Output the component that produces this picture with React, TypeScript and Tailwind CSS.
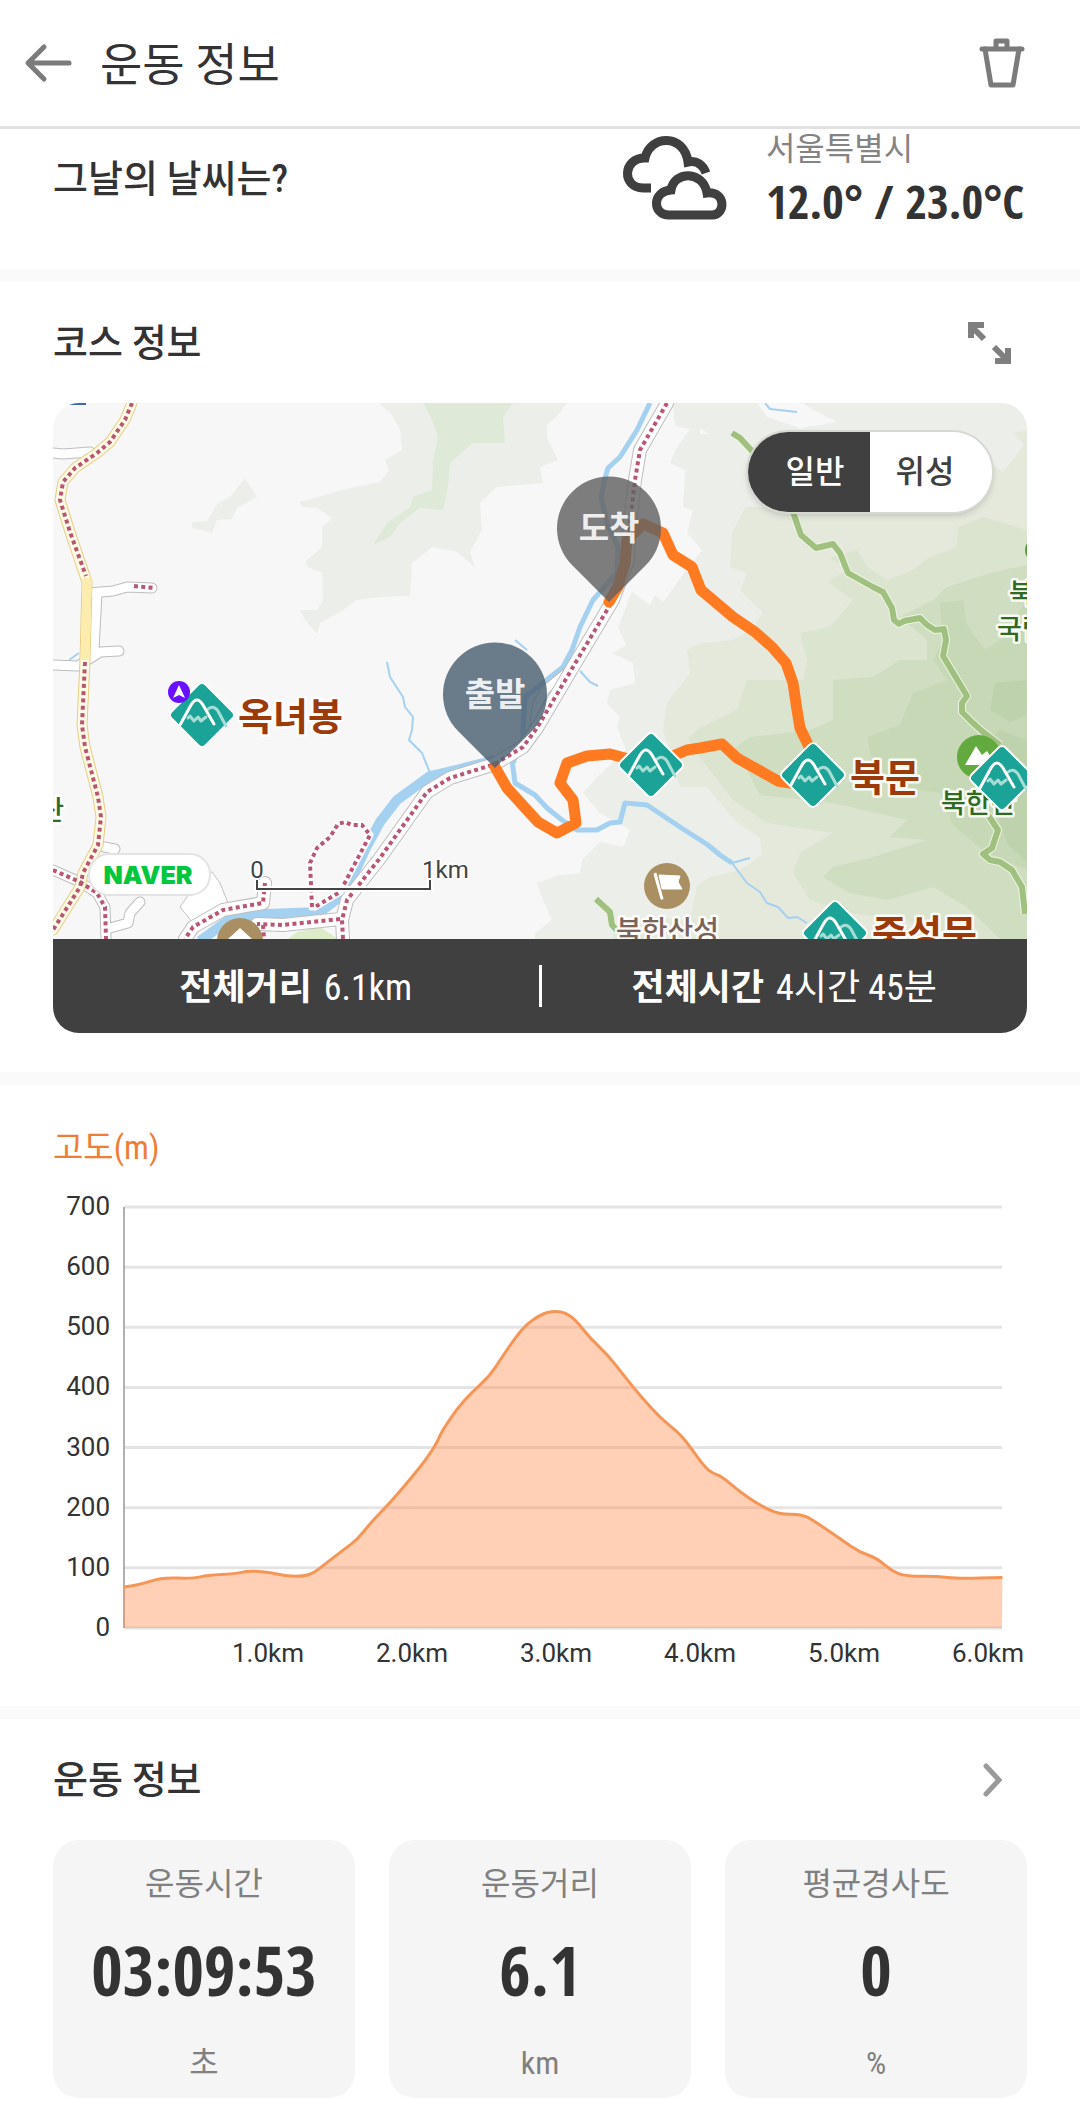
import React, { useState } from 'react';

type MapMode = 'normal' | 'satellite';

interface Stat {
  label: string;
  value: string;
  unit: string;
}

const STATS: Stat[] = [
  { label: '운동시간', value: '03:09:53', unit: '초' },
  { label: '운동거리', value: '6.1', unit: 'km' },
  { label: '평균경사도', value: '0', unit: '%' },
];

// [distance in km, altitude in m]
const ALTITUDE: [number, number][] = [
  [0, 68], [0.1, 71], [0.26, 84], [0.48, 82], [0.58, 88], [0.77, 90], [0.86, 95], [1.01, 93],
  [1.13, 86], [1.25, 86], [1.32, 92], [1.41, 109], [1.53, 131], [1.62, 147], [1.71, 174],
  [1.81, 199], [1.89, 220], [2.01, 254], [2.11, 284], [2.18, 311], [2.2, 324], [2.31, 364],
  [2.42, 393], [2.54, 419], [2.61, 445], [2.73, 487], [2.8, 506], [2.89, 520], [2.94, 525],
  [3.0, 527], [3.07, 524], [3.14, 511], [3.24, 481], [3.36, 454], [3.47, 420], [3.6, 382],
  [3.73, 348], [3.85, 325], [3.92, 305], [4.03, 268], [4.09, 257], [4.15, 252], [4.26, 230],
  [4.38, 209], [4.54, 189], [4.72, 189], [4.83, 172], [4.98, 147], [5.11, 126], [5.23, 116],
  [5.33, 95], [5.43, 86], [5.65, 86], [5.79, 82], [6.1, 84],
];

const CHART = { left: 71, right: 949, top: 17, bottom: 438, maxAltitude: 700, kmWidth: 144 };

// Runs a quadratic curve through the midpoints so the altitude line has no hard corners
const smoothLine = (points: [number, number][]): string => {
  const [first, ...rest] = points;
  const last = points[points.length - 1];
  const curves = rest.slice(0, -1).map(([x, y], i) => {
    const [nextX, nextY] = rest[i + 1];
    return `Q${x},${y} ${(x + nextX) / 2},${(y + nextY) / 2}`;
  });
  return `${first[0]},${first[1]} ${curves.join(' ')} L${last[0]},${last[1]}`;
};

const SectionDivider: React.FC = () => <div className="h-[13px] bg-[#fafafa]" />;

const CloudIcon: React.FC = () => (
  <svg viewBox="624 132 110 92" className="h-[92px] w-[110px]" fill="none" stroke="#3f3f3f" strokeWidth="9">
    <path d="M655 187 H647 C626 187 626 157 649 157 C654 134 688 132 692 161 C701 159 707 164 710 172" />
    <path d="M673 214 C656 214 656 190 675 189 C678 170 707 169 711 192 C730 190 730 214 716 214 Z" />
  </svg>
);

const Terrain: React.FC = () => (
  <g>
    <rect x="53" y="403" width="974" height="536" fill="#f7f7f7" />
    <g fill="#ecefe9">
      <path d="M379 403 L392 415 400 430 402 450 385 460 389 470 380 482 350 488 317 497 300 502 302 507 317 508 332 518 322 527 322 547 305 562 308 567 322 573 323 600 317 610 300 610 305 620 317 634 320 623 340 612 357 600 380 597 410 596 412 563 433 547 457 552 475 567 470 552 482 530 480 503 497 487 543 483 540 467 558 460 547 437 547 425 560 413 567 403 Z" />
      <path d="M245 478 L257 497 237 508 232 519 217 520 212 533 192 528 192 522 207 521 218 503 230 497 Z" />
      <path d="M673 403 L675 426 690 429 677 447 670 463 685 470 683 507 693 510 687 533 702 550 690 565 663 602 655 595 650 605 632 592 618 627 626 645 612 653 633 663 635 683 610 690 607 703 620 717 617 727 626 750 597 777 583 793 600 813 630 830 623 847 600 842 582 860 580 873 560 875 537 883 543 900 552 920 535 933 535 939 1027 939 1027 403 Z" />
    </g>
    <path d="M423 403 L432 420 438 437 433 460 432 490 413 497 410 507 387 523 373 545 390 537 400 523 420 508 443 510 448 487 450 463 473 443 505 443 503 417 513 403 Z" fill="#dfe9d8" />
    <path d="M757 403 L767 417 800 428 837 422 810 408 803 403 Z M700 428 L709 434 700 434 Z M760 495 L768 535 777 550 781 520 790 500 Z" fill="#f7f7f7" />
    <path d="M745 507 L732 533 730 567 747 573 740 590 763 613 750 630 733 640 700 643 687 650 690 673 667 703 663 730 668 745 680 787 707 787 737 823 760 838 762 855 740 870 710 877 697 885 690 920 640 917 613 933 613 939 1027 939 1027 430 1013 433 1024 445 1003 472 987 460 965 455 900 480 850 505 Z" fill="#e5e9dc" />
    <path d="M1027 530 L983 517 958 527 957 547 930 557 913 570 887 580 867 567 857 550 830 558 850 568 828 582 853 600 830 627 800 633 807 660 803 680 747 680 737 710 700 728 688 738 702 760 733 800 767 823 833 833 800 853 793 873 810 900 850 913 907 920 943 939 1027 939 Z" fill="#dae4ce" />
    <path d="M990 573 L947 587 933 600 900 617 927 640 927 660 900 660 873 677 833 680 833 720 810 730 770 735 750 737 735 748 760 795 833 803 907 820 890 837 927 840 870 858 833 867 823 877 850 893 887 900 933 887 967 907 1000 939 1027 939 1027 565 Z" fill="#cfddc0" />
    <path d="M940 603 L963 600 967 625 985 650 1000 640 1027 600 1027 870 983 850 953 825 940 793 900 787 873 763 867 737 900 725 913 693 947 680 933 660 943 640 Z" fill="#c6d8b6" />
    <path d="M1027 740 L1000 730 985 745 992 800 1008 845 1027 862 Z M1027 680 L995 683 990 710 1010 722 1027 715 Z" fill="#bfd2ae" />
    <path d="M288 939 L297 932 320 927 338 939 Z" fill="#dcecc9" />
  </g>
);

const Rivers: React.FC = () => (
  <g fill="none" stroke="#a5d1f1" strokeLinejoin="round">
    <path d="M650 403 L637 430 620 457 608 468 605 478 601 497 607 523 618 547 617 573 593 600 580 627 572 650 563 667 525 697 523 728 523 740 512 765" strokeWidth="5" />
    <path d="M512 760 L515 783 535 795 547 808 562 820 577 830 597 830 610 823 620 822 625 803 647 805 680 827 708 845 720 855 732 863" strokeWidth="5" />
    <path d="M732 863 L747 883 760 892 767 903 778 907 788 918 797 917 807 923 M732 863 L750 858" strokeWidth="2" />
    <path d="M495 760 L460 769 430 776 397 800 380 822 366 848 345 893 320 912 267 914 230 919 200 941" strokeWidth="10" />
    <path d="M387 662 L390 677 403 697 405 707 413 717 412 730 409 740 422 753 430 773" strokeWidth="2" />
    <path d="M515 640 L527 650 M580 671 L590 682 598 686 M765 403 L770 409 797 412 M69 660 L79 653" strokeWidth="2" />
  </g>
);

const ROADS = {
  yellow: 'M132 403 L125 420 110 442 97 453 75 468 63 482 60 500 70 532 87 582 85 660 82 725 85 747 98 797 101 817 98 845 83 873 80 887 53 930',
  side: 'M53 453 L63 454 90 452 M88 593 L113 591 127 587 152 588 M97 593 L94 650 M53 665 L78 666 100 652 119 651 M104 847 L115 849 M140 902 L130 913 128 923 110 928 M53 870 L80 882 97 893 105 907 106 939',
  main: 'M667 403 L640 450 635 480 630 523 628 560 613 600 573 667 537 728 523 747 495 764 450 778 427 792 380 858 347 900 342 920 343 939',
  local: 'M340 919 L283 925 257 924 M265 883 L263 903 223 910 193 927 185 939',
  loop: 'M312 907 L310 863 317 848 330 837 338 824 345 822 352 825 362 825 370 835 340 892 315 907',
  fork: 'M572 668 L545 690 537 705 533 735',
};

const Roads: React.FC = () => (
  <g fill="none" strokeLinecap="round" strokeLinejoin="round">
    <path d="M212 872 L220 883 228 903 193 923 180 907 187 897 Z" fill="#fff" stroke="#c2c2c2" />
    <path d={ROADS.side} stroke="#bdbdbd" strokeWidth="11" />
    <path d={ROADS.side} stroke="#fff" strokeWidth="9" />
    <path d={ROADS.fork} stroke="#bdbdbd" strokeWidth="10" />
    <path d={ROADS.fork} stroke="#fff" strokeWidth="8" />
    <path d={`${ROADS.main} ${ROADS.local}`} stroke="#bdbdbd" strokeWidth="14" />
    <path d={`${ROADS.main} ${ROADS.local}`} stroke="#fff" strokeWidth="12" />
    <path d={ROADS.yellow} stroke="#e6cd83" strokeWidth="11" />
    <path d={ROADS.yellow} stroke="#fffae6" strokeWidth="9" />
    <path d="M87 578 L87 590 85 660" stroke="#fcecae" strokeWidth="9" strokeLinecap="butt" />
    <path d={ROADS.loop} stroke="#fff" strokeWidth="7" />
    <g stroke="#b95674" strokeWidth="4" strokeDasharray="4 3.3" strokeLinecap="butt">
      <path d="M132 403 L125 420 110 442 97 453 75 468 63 482 60 500 70 532 86 576" />
      <path d="M85 662 L82 725 85 747 98 797 101 817 98 845 83 873 80 887 53 930" />
      <path d="M134 586 L154 588 M53 870 L80 882 97 893 105 907 106 939 M263 925 L264 939" />
      <path d={ROADS.loop} />
      <path d={ROADS.main} />
      <path d={ROADS.local} />
    </g>
  </g>
);

const TRAIL =
  'M732 433 L740 438 753 452 780 485 793 512 801 535 816 548 833 544 840 553 848 573 873 587 883 592 892 608 894 620 899 624 904 621 920 618 927 625 935 630 944 629 946 640 943 656 967 696 962 703 962 712 973 723 983 732 1000 745 M988 815 L998 830 992 848 983 854 990 860 1000 862 1012 870 1022 887 1025 914 M596 899 L610 912 612 925 625 939';

const Trails: React.FC = () => (
  <g fill="none" strokeLinejoin="round">
    <path d={TRAIL} stroke="#edf4e4" strokeWidth="8" />
    <path d={TRAIL} stroke="#a0c07f" strokeWidth="6" />
  </g>
);

const COURSE =
  'M609 602 L618 587 625 563 627 540 643 524 663 533 673 555 692 567 701 590 733 617 755 632 772 647 786 663 793 683 797 710 800 728 813 755 M790 783 L778 781 762 772 737 758 722 744 700 748 687 750 651 765 610 754 587 756 567 763 560 783 573 800 576 823 557 833 538 822 507 788 495 767';

const PeakMarker: React.FC<{ x: number; y: number }> = ({ x, y }) => (
  <g transform={`translate(${x} ${y})`} fill="none" strokeLinecap="round" strokeLinejoin="round">
    <rect x="-24" y="-24" width="48" height="48" rx="5" transform="rotate(45)" fill="#1aa396" stroke="#fff" strokeWidth="2" />
    <path d="M-14 3 L-12 1 -8 6 -4 2 -1 6 4 2 M5 -5 Q11 -11 16 -4 L24 11" stroke="#a7ddd6" strokeWidth="3" />
    <path d="M-22 10 L-11 -10 Q-5 -20 1 -10 L12 9" stroke="#fff" strokeWidth="3" />
  </g>
);

const Pin: React.FC<{ x: number; y: number; label: string; color: string }> = ({ x, y, label, color }) => (
  <g transform={`translate(${x} ${y})`}>
    <path d="M0 74 L-36 38 A52 52 0 1 1 36 38 Z" fill={color} fillOpacity="0.82" />
    <text y="12" textAnchor="middle" fill="#fff" fillOpacity="0.9" className="text-[33px] font-bold">
      {label}
    </text>
  </g>
);

const CourseMap: React.FC = () => (
  <svg
    viewBox="53 403 974 536"
    role="img"
    aria-label="코스 지도"
    className="block w-full font-['Noto_Sans_CJK_KR',sans-serif]"
  >
    <Terrain />
    <Rivers />
    <Roads />
    <Trails />
    <path d="M65 403 H86 V405 H65 Z" fill="#3f62b5" />

    {/* place names */}
    <g stroke="#fff" strokeOpacity="0.9" strokeWidth="5" strokeLinejoin="round" className="[paint-order:stroke]">
      <g fill="#2f6b1f" className="text-[27px] font-medium">
        <text x="64" y="820" textAnchor="end">산</text>
        <text x="1009" y="603">북한산</text>
        <text x="997" y="639">국립공원</text>
        <text x="941" y="813">북한산</text>
      </g>
      <text x="616" y="941" fill="#7a6358" className="text-[28px] font-medium">북한산성</text>
      <g fill="#9c3a0a" className="text-[38px] font-bold">
        <text x="238" y="730">옥녀봉</text>
        <text x="850" y="791">북문</text>
        <text x="872" y="947">중성문</text>
      </g>
    </g>

    <circle cx="667" cy="886" r="23" fill="#a98f61" />
    <path d="M654 874 L656 873 663 899 661 899 Z M659 875 L680 876 678 882 682 889 662 889 Z" fill="#fff" stroke="#fff" />
    <circle cx="240" cy="941" r="23" fill="#a98f61" />
    <path d="M240 928 L252 939 228 939 Z" fill="#fff" />
    <circle cx="1037" cy="550" r="12" fill="#4f9a35" />
    <circle cx="979" cy="757" r="22" fill="#62a93e" />
    <path d="M965 765 L976 746 982 755 987 751 996 765 Z" fill="#fff" />

    <path d={COURSE} fill="none" stroke="#ff7a21" strokeWidth="11" strokeLinejoin="round" strokeLinecap="round" />

    <PeakMarker x={202} y={715} />
    <PeakMarker x={651} y={765} />
    <PeakMarker x={813} y={775} />
    <PeakMarker x={1002} y={778} />
    <PeakMarker x={835} y={933} />

    <circle cx="179" cy="692" r="11" fill="#6a0fff" />
    <path d="M179 685 L185 698 179 695 173 698 Z" fill="#fff" />

    <Pin x={609} y={528} label="도착" color="#616161" />
    <Pin x={495} y={694} label="출발" color="#4b5f72" />

    <rect x="89" y="854" width="121" height="41" rx="20" fill="#fff" stroke="#e3e3e3" strokeWidth="2" />
    <text x="148" y="884" textAnchor="middle" fill="#00c73c" className="font-['Inter',sans-serif] text-[25px] font-black">
      NAVER
    </text>

    <path d="M257 880 V889 H430 V880" fill="none" stroke="#fff" strokeWidth="6" />
    <path d="M257 880 V889 H430 V880" fill="none" stroke="#444" strokeWidth="2" />
    <g fill="#444" stroke="#fff" strokeWidth="3" className="font-['Roboto',sans-serif] text-[24px] [paint-order:stroke]">
      <text x="257" y="878" textAnchor="middle">0</text>
      <text x="422" y="878">1km</text>
    </g>
  </svg>
);

const AltitudeChart: React.FC = () => {
  const { left, right, top, bottom, maxAltitude, kmWidth } = CHART;
  const toY = (m: number) => bottom - (m / maxAltitude) * (bottom - top);
  const line = smoothLine(ALTITUDE.map(([km, m]) => [left + km * kmWidth, toY(m)]));

  return (
    <svg viewBox="0 0 974 480" role="img" aria-label="고도 그래프" className="block w-full overflow-visible font-['Roboto',sans-serif]">
      {[0, 100, 200, 300, 400, 500, 600, 700].map((m) => (
        <g key={m}>
          <line x1={left} x2={right} y1={toY(m)} y2={toY(m)} stroke="#e4e4e4" strokeWidth="3" />
          <text x={left - 14} y={toY(m) + 8} textAnchor="end" fill="#333" className="text-[26px]">
            {m}
          </text>
        </g>
      ))}
      <line x1={left} x2={left} y1={top} y2={bottom} stroke="#b0b0b0" strokeWidth="2" />
      <path d={`M${left},${bottom} L${line} L${right},${bottom} Z`} fill="#ff8a45" fillOpacity="0.4" />
      <path d={`M${line}`} fill="none" stroke="#f59556" strokeWidth="3" strokeLinejoin="round" />
      {[1, 2, 3, 4, 5, 6].map((km) => (
        <text key={km} x={left + km * kmWidth} y="472" textAnchor="middle" fill="#333" className="text-[26px]">
          {km.toFixed(1)}km
        </text>
      ))}
    </svg>
  );
};

const App: React.FC = () => {
  const [mode, setMode] = useState<MapMode>('normal');

  return (
    <div className="min-h-screen bg-white font-['Roboto_Condensed','Noto_Sans_CJK_KR',sans-serif] text-[#333]">
      <header className="flex h-[129px] items-center border-b-3 border-[#e2e2e2] pr-[54px] pl-6">
        <button type="button" aria-label="뒤로">
          <svg viewBox="0 0 48 40" className="h-10 w-12" fill="none" stroke="#7b7b7b" strokeWidth="5" strokeLinecap="round" strokeLinejoin="round">
            <path d="M20 4 L4 20 20 36 M5 20 H45" />
          </svg>
        </button>
        <h1 className="ml-7 pt-1 text-[46px] leading-none">운동 정보</h1>
        <button type="button" aria-label="삭제" className="ml-auto">
          <svg viewBox="0 0 48 52" className="h-[52px] w-12" fill="none" stroke="#7b7b7b" strokeWidth="5" strokeLinecap="round" strokeLinejoin="round">
            <path d="M4 12 H44 M18 10 V4 H29 V10" />
            <path d="M7 12 L13 48 H35 L41 12" />
          </svg>
        </button>
      </header>

      <section className="flex h-[140px] items-start justify-between pr-14 pl-[53px]">
        <h2 className="mt-[23px] text-[38px] leading-[54px] font-medium">그날의 날씨는?</h2>
        <div className="flex">
          <div className="mt-1 mr-9">
            <CloudIcon />
          </div>
          <div>
            <p className="text-[32px] leading-[40px] text-[#848484]">서울특별시</p>
            <p className="font-['Open_Sans_Condensed','Roboto_Condensed',sans-serif] text-[47px] leading-[64px] font-bold">
              12.0° / 23.0°C
            </p>
          </div>
        </div>
      </section>

      <SectionDivider />

      <section className="px-[53px] pt-8 pb-[39px]">
        <div className="flex h-[58px] items-center justify-between pr-[14px]">
          <h2 className="text-[38px] leading-[54px] font-medium">코스 정보</h2>
          <button type="button" aria-label="지도 확대">
            <svg viewBox="0 0 48 48" className="size-12" fill="none" stroke="#7f7f7f" strokeWidth="6">
              <path d="M6 19 V6 H19 M6 7 L19 20" />
              <path d="M43 29 V42 H30 M42 41 L29 28" />
            </svg>
          </button>
        </div>

        <div className="relative mt-[31px] overflow-hidden rounded-[26px]">
          <CourseMap />
          <div className="absolute top-[27px] right-[33px] flex h-[84px] w-[248px] overflow-hidden rounded-full border-2 border-[#d6d8d2] bg-white text-[32px] leading-[44px] font-medium shadow-md">
            <button
              type="button"
              aria-pressed={mode === 'normal'}
              onClick={() => setMode('normal')}
              className={`flex-1 pl-3 ${mode === 'normal' ? 'bg-[#404040] text-white' : 'bg-white text-[#404040]'}`}
            >
              일반
            </button>
            <button
              type="button"
              aria-pressed={mode === 'satellite'}
              onClick={() => setMode('satellite')}
              className={`flex-1 pr-3 ${mode === 'satellite' ? 'bg-[#404040] text-white' : 'bg-white text-[#404040]'}`}
            >
              위성
            </button>
          </div>
          <div className="flex h-[94px] items-center bg-[#404040] text-[36px] leading-[50px] text-white">
            <p className="flex flex-1 items-center justify-center gap-3 pt-1">
              <strong className="font-bold">전체거리</strong>
              <span>6.1km</span>
            </p>
            <div className="h-[42px] w-[3px] bg-white" />
            <p className="flex flex-1 items-center justify-center gap-3 pt-1">
              <strong className="font-bold">전체시간</strong>
              <span>4시간 45분</span>
            </p>
          </div>
        </div>
      </section>

      <SectionDivider />

      <section className="px-[53px] pt-[38px] pb-9">
        <h2 className="text-[33px] leading-[50px] text-[#ee7e35]">고도(m)</h2>
        <div className="mt-[17px]">
          <AltitudeChart />
        </div>
      </section>

      <SectionDivider />

      <section className="px-[53px] pt-8 pb-4">
        <div className="flex h-[58px] items-center justify-between pr-5">
          <h2 className="text-[38px] leading-[54px] font-medium">운동 정보</h2>
          <button type="button" aria-label="운동 정보 더보기">
            <svg viewBox="0 0 28 40" className="h-10 w-7" fill="none" stroke="#9a9a9a" strokeWidth="5" strokeLinecap="round">
              <path d="M7 6 L20 20 7 34" />
            </svg>
          </button>
        </div>
        <div className="mt-[31px] grid grid-cols-3 gap-[34px]">
          {STATS.map((stat) => (
            <div key={stat.label} className="flex h-[258px] flex-col items-center rounded-[26px] bg-[#f5f5f5] pt-5 text-[#808080]">
              <p className="text-[32px] leading-[48px]">{stat.label}</p>
              <p className="mt-4 font-['Open_Sans_Condensed','Roboto_Condensed',sans-serif] text-[68px] leading-[92px] font-bold text-[#333]">
                {stat.value}
              </p>
              <p className="mt-6 text-[32px] leading-[46px]">{stat.unit}</p>
            </div>
          ))}
        </div>
      </section>
    </div>
  );
};

export default App;
